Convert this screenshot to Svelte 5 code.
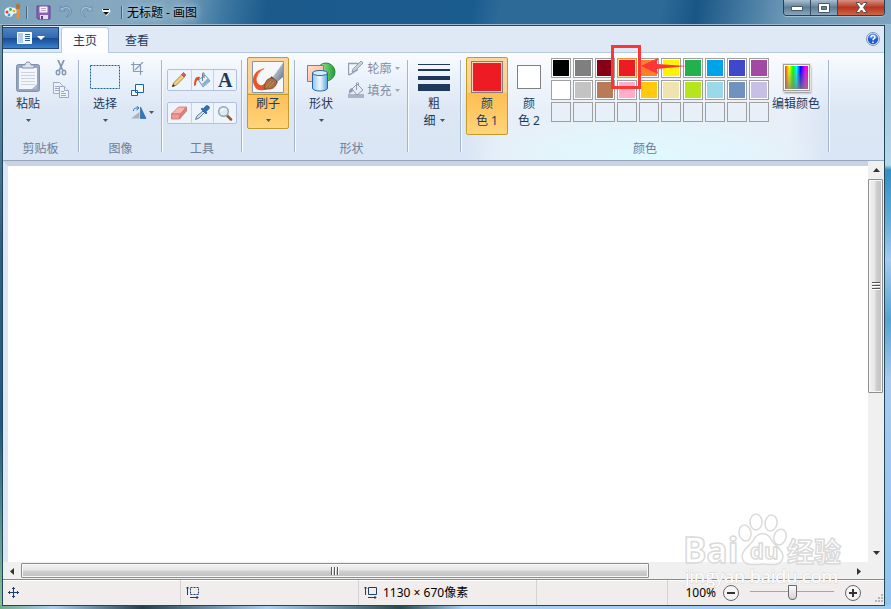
<script lang="ts">
  const swatches: (string | null)[] = [
    '#000000', '#7f7f7f', '#880015', '#ed1c24', '#ff7f27', '#fff200', '#22b14c', '#00a2e8', '#3f48cc', '#a349a4',
    '#ffffff', '#c3c3c3', '#b97a57', '#ffaec9', '#ffc90e', '#efe4b0', '#b5e61d', '#99d9ea', '#7092be', '#c8bfe7',
    ...Array(10).fill(null),
  ];

  const scroll = { horizontal: 75.7, vertical: 58.6 };

  let color1 = $state('#ed1c24');
  let color2 = $state('#ffffff');
  let zoom = $state(50);
</script>

{#snippet arrow()}
  <svg class="arrow" width="5" height="3" viewBox="0 0 5 3" aria-hidden="true">
    <path d="M0 0h5L2.5 3z" fill="currentColor" />
  </svg>
{/snippet}

<div class="window">
  <header class="titlebar">
    <svg class="logo" width="18" height="18" viewBox="0 0 18 18" aria-hidden="true">
      <path d="M1 9C1 5 5 3 9 4c4 0 6 3 5 6-1 2-3 0-4 2 0 2-3 3-6 2s-3-3-3-5z" fill="#e6f1f8" stroke="#6f9db8" />
      <circle cx="4" cy="9" r="1.5" fill="#e04030" />
      <circle cx="7.5" cy="6.500" r="1.4" fill="#42a84a" />
      <circle cx="6" cy="12" r="1.4" fill="#38a0d8" />
      <circle cx="11" cy="8" r="1.3" fill="#e8b020" />
      <path d="M14 6h2.500l-.5 9-1.500 2-1-2z" fill="#f09030" />
      <path d="M12.500 0l1 2 1.500-2 1 2 1.500-1-1 5h-3z" fill="#b9722e" />
    </svg>
    <span class="rule"></span>
    <button class="quick save" aria-label="保存">
      <svg width="16" height="16" viewBox="0 0 16 16">
        <path d="M1 2h13v13H2l-1-1z" fill="#8a62b5" stroke="#65428d" />
        <path d="M3.500 2.500h8v6h-8z" fill="#f6f3fb" />
        <path d="M5 4.500h5M5 6.500h5" stroke="#b9a9cf" />
        <path d="M4 11h8v4H4z" fill="#e3dcef" />
        <path d="M5 12h2v3H5z" fill="#58407a" />
      </svg>
    </button>
    <button class="quick" aria-label="撤消">
      <svg width="14" height="14" viewBox="0 0 14 14">
        <path d="M1 1v5h5L4.500 4.500C8 2.500 11 5 10 8c-.5 2-2 3-3 4 4-1 6-4 5-7C11 1 6 0 3 3z" fill="#9fb9d3" stroke="#6688ac" />
      </svg>
    </button>
    <button class="quick" aria-label="重做">
      <svg width="14" height="14" viewBox="0 0 14 14">
        <path d="M13 1v5H8l1.500-1.500C6 2.500 3 5 4 8c.5 2 2 3 3 4-4-1-6-4-5-7 1-4 6-5 9-2z" fill="#a6bed6" stroke="#6e90b2" />
      </svg>
    </button>
    <button class="quick more" aria-label="自定义快速访问工具栏">
      <svg width="9" height="7" viewBox="0 0 9 7">
        <path d="M0 0h8v2H0zM0 2h9L4.500 7z" fill="#fff" />
        <path d="M1 0h6v1H1zM1 3h6L4 6z" fill="#101010" />
      </svg>
    </button>
    <span class="rule"></span>
    <h1>无标题 - 画图</h1>
    <div class="controls">
      <button aria-label="最小化">
        <svg width="14" height="8" viewBox="0 0 14 8"><path d="M1.500 2.500h11v4h-11z" fill="#fff" stroke="#4b5868" /></svg>
      </button>
      <button aria-label="最大化">
        <svg width="12" height="10" viewBox="0 0 12 10">
          <path d="M.5.5h11v9H.5z" fill="#fff" stroke="#4b5868" />
          <path d="M3.500 3.500h5v3h-5z" fill="#6585a0" stroke="#4b5868" />
        </svg>
      </button>
      <button class="close" aria-label="关闭">
        <svg width="13" height="11" viewBox="0 0 13 11">
          <path d="M1 .5h3.500l2 2.500 2-2.500H12L8.500 5.500l3.500 5H8.500l-2-2.500-2 2.500H1l3.500-5z" fill="#fff" stroke="#5a4a50" />
        </svg>
      </button>
    </div>
  </header>

  <main class="client">
    <nav class="tabs">
      <button class="file" aria-label="画图">
        <svg width="15" height="12" viewBox="0 0 15 12">
          <path d="M.5.5h14v11H.5z" fill="#f4f9ff" stroke="#fff" />
          <path d="M1 1h5v10H1z" fill="#b5cde9" />
          <path d="M8 2.500h5M8 4.500h5M8 6.500h5M8 8.500h5" stroke="#2d62a8" />
        </svg>
        <svg width="8" height="4" viewBox="0 0 8 4"><path d="M0 0h8L4 4z" fill="#fff" /></svg>
      </button>
      <button class="tab active">主页</button>
      <button class="tab">查看</button>
      <button class="help" aria-label="帮助">
        <svg width="14" height="14" viewBox="0 0 14 14">
          <circle cx="7" cy="7" r="6.5" fill="#e2ecfa" stroke="#7b96bd" />
          <circle cx="7" cy="7" r="5.2" fill="#1e5bd0" />
          <path d="M2.500 6a4.500 4.500 0 0 1 9 0q-4.500 2-9 0" fill="#6b9df0" opacity=".6" />
          <path d="M5 5.500C5 3 9 3 9 5.300 9 6.700 7 6.700 7 8.200M7 9.500V11" fill="none" stroke="#fff" stroke-width="1.5" />
        </svg>
      </button>
    </nav>

    <div class="ribbon">
      <section class="group clipboard">
        <div class="body">
          <button class="big">
            <span class="icon">
              <svg width="26" height="32" viewBox="0 0 26 32">
                <rect x="1.5" y="3.5" width="23" height="27" rx="2" fill="#96a6c1" stroke="#8191ae" />
                <path d="M4 7h18v21H4z" fill="#f3f6fb" />
                <path d="M6 11.500h14M6 14.500h14M6 17.500h14M6 20.500h14M6 23.500h14" stroke="#c8d3e3" />
                <path d="M7 7V4h3c0-4 6-4 6 0h3v3z" fill="#dbe3ef" stroke="#8191ae" />
                <path d="M17 28h5v-5z" fill="#aab7cd" />
              </svg>
            </span>
            <span>粘贴</span>
            <span class="drop">{@render arrow()}</span>
          </button>
          <div class="stack">
            <button aria-label="剪切">
              <svg width="12" height="16" viewBox="0 0 12 16" fill="none" stroke="#8797b2">
                <path d="M3 0l4.500 10M9 0L4.500 10" stroke-width="1.8" />
                <ellipse cx="3" cy="12.5" rx="1.7" ry="2.3" stroke-width="1.5" />
                <ellipse cx="9" cy="12.5" rx="1.7" ry="2.3" stroke-width="1.5" />
              </svg>
            </button>
            <button aria-label="复制">
              <svg width="16" height="16" viewBox="0 0 16 16" fill="#edf2f9" stroke="#9cabc3">
                <path d="M.5.5h6l3 3v8h-9z" />
                <path d="M2 4.500h4M2 6.500h5M2 8.500h5" />
                <path d="M6.500 4.500h5l4 4v7h-9z" />
                <path d="M11.500 4.500v4h4M8 9.500h3M8 11.500h5M8 13.500h5" />
              </svg>
            </button>
          </div>
        </div>
        <h2>剪贴板</h2>
      </section>

      <section class="group image">
        <div class="body">
          <button class="big">
            <span class="icon">
              <svg width="30" height="26" viewBox="0 0 30 26">
                <rect x=".5" y="1.5" width="29" height="23" fill="#e6f1fc" stroke="#1b5fa3" stroke-dasharray="2 1" />
              </svg>
            </span>
            <span>选择</span>
            <span class="drop">{@render arrow()}</span>
          </button>
          <div class="stack wide">
            <button aria-label="裁剪">
              <svg width="14" height="13" viewBox="0 0 14 13" fill="none" stroke="#8c9bb5">
                <path d="M2.500 0v9.500H12M0 2.500h9.500V13M4 8l8-8" stroke-width="1.2" />
              </svg>
            </button>
            <button aria-label="重新调整大小">
              <svg width="14" height="13" viewBox="0 0 14 13" fill="#f6faff" stroke="#1b62a6">
                <path d="M4.500.5h8v8h-8zM.5 6.500h6v5h-6z" />
              </svg>
            </button>
            <button aria-label="旋转">
              <svg width="16" height="13" viewBox="0 0 16 13">
                <path d="M0 12.500h8.500V6z" fill="#a9b3bd" />
                <path d="M9.500 12.500H15L9.500 1z" fill="#2f77b8" stroke="#1b5c98" stroke-width=".6" />
                <path d="M2.500 5c0-3 2-3 5-3M5.500 0l2.500 2-2.500 2" fill="none" stroke="#2773b8" />
              </svg>
              {@render arrow()}
            </button>
          </div>
        </div>
        <h2>图像</h2>
      </section>

      <section class="group tools">
        <div class="body">
          <div class="toolrow">
            <button aria-label="铅笔">
              <svg width="16" height="16" viewBox="0 0 16 16">
                <path d="M1.500 14.500l1.500-4 8-8 2.500 2.500-8 8z" fill="#f2cf7a" stroke="#8d713c" stroke-width=".8" />
                <path d="M10.500 2.500l2-2 2.500 2.500-2 2z" fill="#d75a65" stroke="#8d4148" stroke-width=".6" />
                <path d="M1 15l1-3 2 2z" fill="#30281e" />
              </svg>
            </button>
            <button aria-label="用颜色填充">
              <svg width="18" height="17" viewBox="0 0 18 17">
                <path d="M5.500 8L12 3l5 6-7 6z" fill="#e4eff9" stroke="#6b9bc6" />
                <path d="M10 14l7-5-2-3-6 6z" fill="#86b0d6" />
                <path d="M9.500 9V1.500q0-1 1.500-.5v5" fill="none" stroke="#6d7d90" />
                <path d="M7 5C3 4 1 7 1 14l2-1C3 9 4 8 6 8z" fill="#e44d23" />
              </svg>
            </button>
            <button class="text" aria-label="文本">A</button>
          </div>
          <div class="toolrow">
            <button aria-label="橡皮擦">
              <svg width="18" height="16" viewBox="0 0 18 16">
                <path d="M1.500 9l7-7h8l-6 7z" fill="#f7b6ae" stroke="#c9716a" stroke-width=".8" />
                <path d="M1.500 9h9l-1 5h-8z" fill="#ee9a92" stroke="#c9716a" stroke-width=".8" />
                <path d="M10.500 9l6-7v4l-7 8z" fill="#df837c" stroke="#c9716a" stroke-width=".8" />
              </svg>
            </button>
            <button aria-label="颜色选取器">
              <svg width="16" height="16" viewBox="0 0 16 16">
                <path d="M1.500 14.500L3 11l6-5 1.500 1.500L5 13z" fill="#d8e8f6" stroke="#5b7896" />
                <path d="M7 4l5 5 1-1-1-1.500c4-3 4-4 2.500-5.500S11 1 9.500 4L8 3z" fill="#2d74b9" stroke="#174a84" stroke-width=".6" />
              </svg>
            </button>
            <button aria-label="放大镜">
              <svg width="16" height="16" viewBox="0 0 16 16">
                <path d="M10.500 11l3.500 3.500" stroke="#8d5d37" stroke-width="2.500" stroke-linecap="round" />
                <circle cx="6.5" cy="6.5" r="4.8" fill="#dcebf8" stroke="#9aa5b1" stroke-width="1.5" />
                <path d="M4 6.500q0-2.500 3-2.500" fill="none" stroke="#fff" />
              </svg>
            </button>
          </div>
        </div>
        <h2>工具</h2>
      </section>

      <section class="group brushes">
        <div class="body">
          <button class="big selected split">
            <span class="icon">
              <svg width="32" height="32" viewBox="0 0 32 32">
                <defs>
                  <linearGradient id="ferrule" x2="1" y2="1">
                    <stop stop-color="#e8edf3" />
                    <stop offset="1" stop-color="#5d6f87" />
                  </linearGradient>
                </defs>
                <path d="M.5.5h31v31H.5z" fill="#f5f7fa" stroke="#8696ac" />
                <path d="M13 7C2 9-1 18 2 24c2 5 6 6 10 5 3 0 5-2 6-4l-4-4c-2 2-4 4-6 3C2 21 4 12 13 7z" fill="#ec5426" />
                <path d="M5 16c1-4 3-7 7-8" fill="none" stroke="#f58c61" />
                <path d="M20 17L31 2v14l-7 6z" fill="url(#ferrule)" />
                <path d="M19 16l6 6" stroke="#3b424f" stroke-width="2" />
                <path d="M12 28c1-6 2-11 8-11 4 1 6 4 4 7-3 5-7 4-12 4z" fill="#a77040" stroke="#714623" stroke-width=".7" />
                <path d="M14 26l5-6M17 26l5-5" stroke="#cb945a" stroke-width=".8" />
              </svg>
            </span>
            <span>刷子</span>
            <span class="drop">{@render arrow()}</span>
          </button>
        </div>
      </section>

      <section class="group shapes">
        <div class="body">
          <button class="big">
            <span class="icon">
              <svg width="30" height="30" viewBox="0 0 30 30">
                <defs>
                  <linearGradient id="green" x2="1"><stop stop-color="#baf0b2" /><stop offset="1" stop-color="#1f9e31" /></linearGradient>
                  <linearGradient id="orange" x2="1" y2="1"><stop stop-color="#ffe2d4" /><stop offset="1" stop-color="#ffad84" /></linearGradient>
                  <linearGradient id="blue" x2="1"><stop stop-color="#8cc6f5" /><stop offset=".5" stop-color="#eef8ff" /><stop offset="1" stop-color="#5ba2e0" /></linearGradient>
                </defs>
                <circle cx="20" cy="10" r="9" fill="url(#green)" stroke="#208c31" />
                <path d="M1.500 3.500h16v16h-16z" fill="url(#orange)" stroke="#df612f" />
                <path d="M6.500 11v15c0 4 15 4 15 0V11z" fill="url(#blue)" stroke="#2668aa" />
                <ellipse cx="14" cy="11" rx="7.5" ry="2.5" fill="#d8efff" stroke="#2668aa" />
              </svg>
            </span>
            <span>形状</span>
            <span class="drop">{@render arrow()}</span>
          </button>
          <div class="stack labelled">
            <button disabled>
              <svg width="16" height="16" viewBox="0 0 16 16" fill="none" stroke="#8f9db5">
                <path d="M10 3.500H.5v11H2l8-5" stroke-width="1.3" />
                <path d="M4 12l1-3 8-8 2 2-8 8z" fill="#c8d1df" />
              </svg>
              <span>轮廓</span>
              {@render arrow()}
            </button>
            <button disabled>
              <svg width="16" height="16" viewBox="0 0 16 16">
                <path d="M0 12h16v4H0z" fill="#a7b4c9" />
                <path d="M4 7l5-5 6 6-6 5z" fill="#e8edf5" stroke="#8c9ab2" />
                <path d="M8.500 8V1q1-1 2 0v3" fill="none" stroke="#8c9ab2" />
                <path d="M5 6C1 6 1 9 1 12l4-3z" fill="#8c9ab2" />
              </svg>
              <span>填充</span>
              {@render arrow()}
            </button>
          </div>
        </div>
        <h2>形状</h2>
      </section>

      <section class="group size">
        <div class="body">
          <button class="big">
            <span class="icon">
              <svg width="32" height="28" viewBox="0 0 32 28" fill="#1e395b">
                <path d="M0 1h32v1H0zM0 6h32v2H0zM0 13h32v4H0zM0 21h32v7H0z" />
              </svg>
            </span>
            <span>粗</span>
            <span class="drop">细 {@render arrow()}</span>
          </button>
        </div>
      </section>

      <section class="group colors">
        <div class="body">
          <button class="big selected tall">
            <span class="icon"><i class="chosen" style:background={color1}></i></span>
            <span>颜</span>
            <span>色 1</span>
          </button>
          <button class="big tall">
            <span class="icon"><i class="chosen small" style:background={color2}></i></span>
            <span>颜</span>
            <span>色 2</span>
          </button>
          <div class="palette">
            {#each swatches as color, i}
              <button
                class="swatch"
                class:hot={i === 3}
                class:empty={!color}
                style:background-color={color}
                aria-label={color ?? '自定义颜色'}
                onclick={() => color && (color1 = color)}
              ></button>
            {/each}
            <svg class="callout" width="77" height="45" viewBox="0 0 77 45" aria-hidden="true">
              <path d="M1.500 1.500h27v41h-27z" fill="none" stroke="#fb3636" stroke-width="3" />
              <path d="M30 21l17-8-1 6 30 2-30 3 1 5z" fill="#fb3636" />
            </svg>
          </div>
          <button class="big edit">
            <span class="icon"><i class="spectrum"></i></span>
            <span>编辑颜色</span>
          </button>
        </div>
        <h2>颜色</h2>
      </section>
    </div>

    <div class="workspace">
      <div class="canvas"></div>
      <div class="scrollbar vertical">
        <button aria-label="向上滚动"><svg width="7" height="4" viewBox="0 0 7 4"><path d="M0 4h7L3.500 0z" fill="#333" /></svg></button>
        <div class="track">
          <div class="thumb" style:height="{scroll.vertical}%">
            <svg width="8" height="8" viewBox="0 0 8 8"><path d="M0 .5h8M0 3.500h8M0 6.500h8" stroke="#555" /><path d="M0 1.500h8M0 4.500h8M0 7.500h8" stroke="#fff" /></svg>
          </div>
        </div>
        <button aria-label="向下滚动"><svg width="7" height="4" viewBox="0 0 7 4"><path d="M0 0h7L3.500 4z" fill="#333" /></svg></button>
      </div>
      <div class="scrollbar horizontal">
        <button aria-label="向左滚动"><svg width="4" height="7" viewBox="0 0 4 7"><path d="M4 0v7L0 3.500z" fill="#333" /></svg></button>
        <div class="track">
          <div class="thumb" style:width="{scroll.horizontal}%">
            <svg width="8" height="8" viewBox="0 0 8 8"><path d="M.5 0v8M3.500 0v8M6.500 0v8" stroke="#555" /><path d="M1.500 0v8M4.500 0v8M7.500 0v8" stroke="#fff" /></svg>
          </div>
        </div>
        <button aria-label="向右滚动"><svg width="4" height="7" viewBox="0 0 4 7"><path d="M0 0v7l4-3.500z" fill="#333" /></svg></button>
      </div>
    </div>

    <footer class="status">
      <div class="cell">
        <svg width="11" height="11" viewBox="0 0 11 11" fill="none" stroke="#1e3f6b">
          <path d="M5.500 0v11M0 5.500h11M4 2l1.500-1.500L7 2M4 9l1.500 1.500L7 9M2 4L.5 5.500 2 7M9 4l1.500 1.500L9 7" />
        </svg>
      </div>
      <div class="cell">
        <svg width="14" height="13" viewBox="0 0 14 13" fill="none" stroke="#1e3f6b">
          <path d="M1.500 9V1M0 2.500L1.500 1 3 2.500M4 11.500h8M10.500 10l1.500 1.500-1.500 1.500" />
          <path d="M4.500 1.500h8v7h-8z" stroke-dasharray="2 1" />
        </svg>
      </div>
      <div class="cell">
        <svg width="14" height="13" viewBox="0 0 14 13" fill="none" stroke="#1e3f6b">
          <path d="M1.500 9V1M0 2.500L1.500 1 3 2.500M4 11.500h8M10.500 10l1.500 1.500-1.500 1.500" />
          <path d="M4.500 1.500h8v7h-8z" />
        </svg>
        <span>1130 × 670像素</span>
      </div>
      <div class="cell spare"></div>
      <div class="zoom">
        <label for="zoom">100%</label>
        <button aria-label="缩小">
          <svg width="16" height="16" viewBox="0 0 16 16"><circle cx="8" cy="8" r="7.5" fill="#f5f5f5" stroke="#686868" /><path d="M4 8h8" stroke="#333" stroke-width="2" /></svg>
        </button>
        <input id="zoom" type="range" min="0" max="100" bind:value={zoom} />
        <button aria-label="放大">
          <svg width="16" height="16" viewBox="0 0 16 16"><circle cx="8" cy="8" r="7.5" fill="#f5f5f5" stroke="#686868" /><path d="M4 8h8M8 4v8" stroke="#333" stroke-width="2" /></svg>
        </button>
      </div>
      <svg class="grip" width="10" height="10" viewBox="0 0 10 10" fill="#b5b5b5">
        <path d="M7 0h2v2H7zM4 3h2v2H4zM7 3h2v2H7zM1 6h2v2H1zM4 6h2v2H4zM7 6h2v2H7z" />
      </svg>
    </footer>
  </main>

  <svg class="watermark" width="164" height="80" viewBox="0 0 164 80" aria-hidden="true">
    <g fill="#fff" fill-opacity=".7" stroke="#dadada" stroke-width="1.5">
      <ellipse cx="62" cy="20" rx="6" ry="8" transform="rotate(-10 62 20)" />
      <ellipse cx="73" cy="9" rx="6" ry="8" />
      <ellipse cx="88" cy="10" rx="6" ry="8" transform="rotate(10 88 10)" />
      <ellipse cx="97" cy="24" rx="6" ry="8" transform="rotate(20 97 24)" />
      <path d="M59 44c0-9 9-11 12-18 4-7 13-7 17 0 3 7 12 9 12 18-1 9-11 8-20 7-10 1-20 2-21-7z" />
      <text class="brand" x="0" y="50">Bai</text>
      <text class="paw" x="67" y="46">du</text>
      <text class="word" x="104" y="49">经验</text>
    </g>
    <text class="url" x="2" y="70">jingyan.baidu.com</text>
  </svg>
</div>

<style>
  :global(body) {
    margin: 0;
  }

  .window {
    position: relative;
    box-sizing: border-box;
    min-height: 100vh;
    display: flex;
    flex-direction: column;
    padding: 0 6px 3px 2px;
    font: 12px/17px 'Noto Sans', 'Noto Sans CJK SC', sans-serif;
    color: #1e395b;
    background:
      linear-gradient(90deg, #76a98c 0, #a9cdec 6%, #24404c 16%, #a9cff0 30%, #2a4a50 45%, #a9cff2 52%, #9fcaf0) bottom / 100% 4px no-repeat,
      linear-gradient(#8bb3cd 0, #b5d9ea 165px, #3290c0 170px, #64acd7 220px, #a4caef 260px, #55a4d0 320px, #a9caf0 380px, #8fc4ed) right / 7px 100% no-repeat,
      linear-gradient(#7ea0b8, #2e5f84 40%, #1d5a80 70%, #8bc29b);
  }

  button {
    padding: 0;
    border: 0;
    background: none;
    font: inherit;
    color: inherit;
  }

  svg {
    display: block;
    flex: none;
  }

  h1,
  h2 {
    margin: 0;
    font: inherit;
  }

  .titlebar {
    height: 24px;
    margin: 0 -6px 0 -2px;
    padding: 0 6px 0 3px;
    display: flex;
    align-items: center;
    border-bottom: 1px solid #9db9cc;
    background: linear-gradient(100deg, #7ba1ba 0, #86a9c0 12%, #7ba2bb 20%, #3f79a3 25%, #1b5a8b 30%, #1b5c8f 53%, #2d6a98 56%, #2d6a98 74%, #195686 78%, #6b98b7 88%, #7ba3bf);
  }

  .rule {
    width: 1px;
    height: 13px;
    margin: 0 5px;
    background: #46647b;
    box-shadow: 1px 0 #a9c3d4;
  }

  .quick {
    width: 20px;
    display: grid;
    place-items: center;
  }

  .save {
    width: 24px;
  }

  .titlebar h1 {
    color: #000;
    text-shadow: 0 0 6px #c5dbe9, 0 0 8px #a5c5d9;
  }

  .controls {
    align-self: flex-start;
    margin-left: auto;
    display: flex;
    height: 15px;
    border: 1px solid #2b3f50;
    border-top: 0;
    border-radius: 0 0 4px 4px;
    overflow: hidden;
    box-shadow: 0 1px #a3bfd2;
  }

  .controls button {
    width: 27px;
    display: grid;
    place-items: center;
    border-right: 1px solid #344b5e;
    background: linear-gradient(#a9bfcf, #5d7d97 50%, #87a8be);
  }

  .controls .close {
    width: 46px;
    border: 0;
    background: linear-gradient(#d59084, #b83620 50%, #cf6546);
  }

  .client {
    flex: 1;
    display: flex;
    flex-direction: column;
    border: 1px solid #23465b;
    background: #f0edec;
  }

  .tabs {
    height: 26px;
    display: flex;
    background: #dfe9f5;
    border-bottom: 1px solid #b7c9e1;
  }

  .file {
    width: 56px;
    height: 22px;
    margin-top: 1px;
    display: flex;
    align-items: center;
    justify-content: center;
    gap: 5px;
    border: 1px solid #1c4582;
    border-left: 0;
    background: linear-gradient(#4e83c4, #3369b0 48%, #164a93 50%, #3b81cb);
  }

  .tab {
    width: 48px;
    margin: 1px 2px 0;
    border: 1px solid transparent;
    border-bottom: 0;
    border-radius: 3px 3px 0 0;
    color: #1e395b;
  }

  .tab.active {
    margin-bottom: -1px;
    border-color: #b7c9e1;
    background: #fbfdff;
  }

  .help {
    margin: 0 4px 0 auto;
  }

  .ribbon {
    display: flex;
    border-bottom: 1px solid #94a6c1;
    background: linear-gradient(#f9fcff, #e6eef9 32%, #dce6f4 55%, #dae6f5);
  }

  .group {
    display: flex;
    flex-direction: column;
    box-sizing: border-box;
    padding: 4px 0 3px 4px;
    background:
      linear-gradient(#a3b5cf, #a3b5cf) calc(100% - 1px) 7px / 1px 92px no-repeat,
      linear-gradient(#f7faff, #f7faff) right 7px / 1px 92px no-repeat;
  }

  .group h2 {
    margin-left: -6px;
    text-align: center;
    color: #6c7e99;
  }

  .body {
    display: flex;
    height: 83px;
    align-items: flex-start;
  }

  .clipboard { width: 77px; }
  .image { width: 83px; }
  .tools { width: 80px; }
  .brushes { width: 53px; }
  .shapes { width: 113px; }
  .size { width: 53px; }

  .colors {
    width: 368px;
    background:
      linear-gradient(#a3b5cf, #a3b5cf) calc(100% - 1px) 7px / 1px 92px no-repeat,
      linear-gradient(#f7faff, #f7faff) right 7px / 1px 92px no-repeat,
      radial-gradient(ellipse 50% 50% at 50% 100%, #dffaff, transparent) 5px 0 / 358px 100% no-repeat,
      linear-gradient(90deg, transparent, rgb(255 255 255 / 35%) 10% 90%, transparent) 5px 0 / 358px 100% no-repeat;
  }

  .big {
    box-sizing: border-box;
    width: 42px;
    height: 72px;
    flex: none;
    padding-top: 2px;
    display: flex;
    flex-direction: column;
    align-items: center;
    border: 1px solid transparent;
    border-radius: 2px;
    white-space: nowrap;
  }

  .big > span {
    flex: none;
  }

  .tall {
    height: 78px;
  }

  .selected {
    border-color: #c29b29;
    background: linear-gradient(#fbd6a0, #fcd08c 45%, #febd51 46%, #ffd57c);
  }

  .split {
    background:
      linear-gradient(#c29b29, #c29b29) 0 36px / 100% 1px no-repeat,
      linear-gradient(#fbd6a0, #fcd08c 50%, #febf56 51%, #ffd57c);
  }

  .icon {
    height: 35px;
    display: grid;
    place-items: center;
    padding-bottom: 1px;
    box-sizing: border-box;
  }

  .drop {
    display: flex;
    align-items: center;
    gap: 4px;
    height: 17px;
  }

  .arrow {
    color: #46566e;
  }

  .stack {
    width: 24px;
    display: grid;
    grid-auto-rows: 22px;
  }

  .stack button {
    display: flex;
    align-items: center;
    justify-content: center;
    gap: 2px;
  }

  .stack.wide {
    padding-left: 5px;
  }

  .stack.wide button {
    justify-content: flex-start;
  }

  .stack.labelled {
    width: 56px;
    padding-left: 4px;
  }

  .labelled button {
    gap: 3px;
    color: #7e8ca5;
  }

  .labelled .arrow {
    color: #9ba8bb;
  }

  .tools .body {
    flex-direction: column;
    gap: 11px;
    padding-top: 12px;
    box-sizing: border-box;
  }

  .toolrow {
    box-sizing: border-box;
    width: 70px;
    height: 22px;
    display: grid;
    grid-template-columns: repeat(3, 1fr);
    border: 1px solid #b2c1d9;
    border-radius: 2px;
    background: #eef4fc;
  }

  .toolrow button {
    display: grid;
    place-items: center;
  }

  .toolrow button + button {
    border-left: 1px solid #c6d3e6;
  }

  .text {
    font: bold 20px/20px 'Liberation Serif', serif;
  }

  .chosen {
    box-sizing: border-box;
    width: 32px;
    height: 32px;
    border: 1px solid #808080;
    box-shadow: inset 0 0 0 1px #f0d8b8;
  }

  .chosen.small {
    width: 24px;
    height: 24px;
    box-shadow: none;
  }

  .palette {
    position: relative;
    display: grid;
    grid-template-columns: repeat(10, 20px);
    gap: 2px;
    margin: 1px 0 0 1px;
  }

  .swatch {
    box-sizing: border-box;
    height: 20px;
    border: 1px solid #a0a0a0;
    box-shadow: inset 0 0 0 1px #fff;
  }

  .swatch.empty {
    box-shadow: none;
  }

  .swatch.hot {
    border-color: #f29536;
    box-shadow: inset 0 0 0 1px #ffe294;
  }

  .callout {
    position: absolute;
    left: 60px;
    top: -13px;
    pointer-events: none;
  }

  .edit {
    width: 54px;
  }

  .spectrum {
    width: 25px;
    height: 25px;
    border: 1px solid #a59e98;
    outline: 1px solid #e5e2e0;
    box-shadow: inset 0 0 0 1px #fff, 1px 2px 2px #888;
    background:
      linear-gradient(transparent 10%, rgb(128 128 128 / 80%)),
      linear-gradient(90deg, #f00, #ff0 20%, #0f0 36%, #0ff 50%, #00f 66%, #f0f 86%, #f06);
  }

  .workspace {
    flex: 1;
    display: grid;
    grid-template: 1fr 17px / 1fr 16px;
    background: #f0f0f0;
  }

  .canvas {
    border-top: 5px solid #c8d2e3;
    border-left: 5px solid #dce6f4;
    background: #fff;
  }

  .scrollbar {
    display: flex;
    background: #f0f0f0;
  }

  .vertical {
    flex-direction: column;
  }

  .scrollbar button {
    width: 18px;
    display: grid;
    place-items: center;
  }

  .vertical button {
    width: 16px;
    height: 18px;
  }

  .horizontal {
    padding-top: 1px;
  }

  .track {
    flex: 1;
  }

  .thumb {
    box-sizing: border-box;
    display: grid;
    place-items: center;
    border: 1px solid #8e8e8e;
    border-radius: 1px;
    box-shadow: inset 0 0 0 1px #f7f7f7;
  }

  .vertical .thumb {
    width: 15px;
    background: linear-gradient(90deg, #f3f3f3, #e5e5e5 48%, #d0d0d0 52%, #c0c0c0);
  }

  .horizontal .thumb {
    height: 15px;
    background: linear-gradient(#f3f3f3, #e5e5e5 48%, #d0d0d0 52%, #c0c0c0);
  }

  .status {
    height: 25px;
    display: flex;
    align-items: center;
    border-top: 1px solid #8a8a8a;
    color: #000;
    box-shadow: inset 0 1px #fff;
  }

  .cell {
    box-sizing: border-box;
    width: 178px;
    align-self: stretch;
    display: flex;
    align-items: center;
    gap: 5px;
    padding-left: 5px;
    border-right: 1px solid #d3d5d3;
  }

  .spare {
    flex: 1;
    max-width: 131px;
  }

  .zoom {
    display: flex;
    align-items: center;
    margin-left: auto;
  }

  .zoom label {
    margin-right: 7px;
  }

  .zoom input {
    appearance: none;
    width: 84px;
    height: 18px;
    margin: 0 11px;
    background: linear-gradient(#a1a8a8, #a1a8a8) 0 7px / 100% 1px no-repeat;
  }

  .zoom input::-webkit-slider-thumb {
    appearance: none;
    box-sizing: border-box;
    width: 9px;
    height: 15px;
    border: 1px solid #686868;
    border-radius: 1px 1px 5px 5px;
    background: linear-gradient(#fafafa, #d5d5d5);
  }

  .grip {
    align-self: flex-end;
    margin: 0 0 1px 13px;
  }

  .watermark {
    position: absolute;
    right: 44px;
    bottom: 16px;
    pointer-events: none;
    font-family: 'Open Sans', 'Noto Sans CJK SC', sans-serif;
  }

  .brand {
    font-size: 35px;
    font-weight: bold;
  }

  .paw {
    font-size: 22px;
    font-weight: bold;
  }

  .word {
    font-size: 27px;
    font-weight: bold;
  }

  .url {
    font-size: 18px;
    fill: #fff;
    stroke: #d5d5d5;
    stroke-width: 1px;
    paint-order: stroke;
  }
</style>
